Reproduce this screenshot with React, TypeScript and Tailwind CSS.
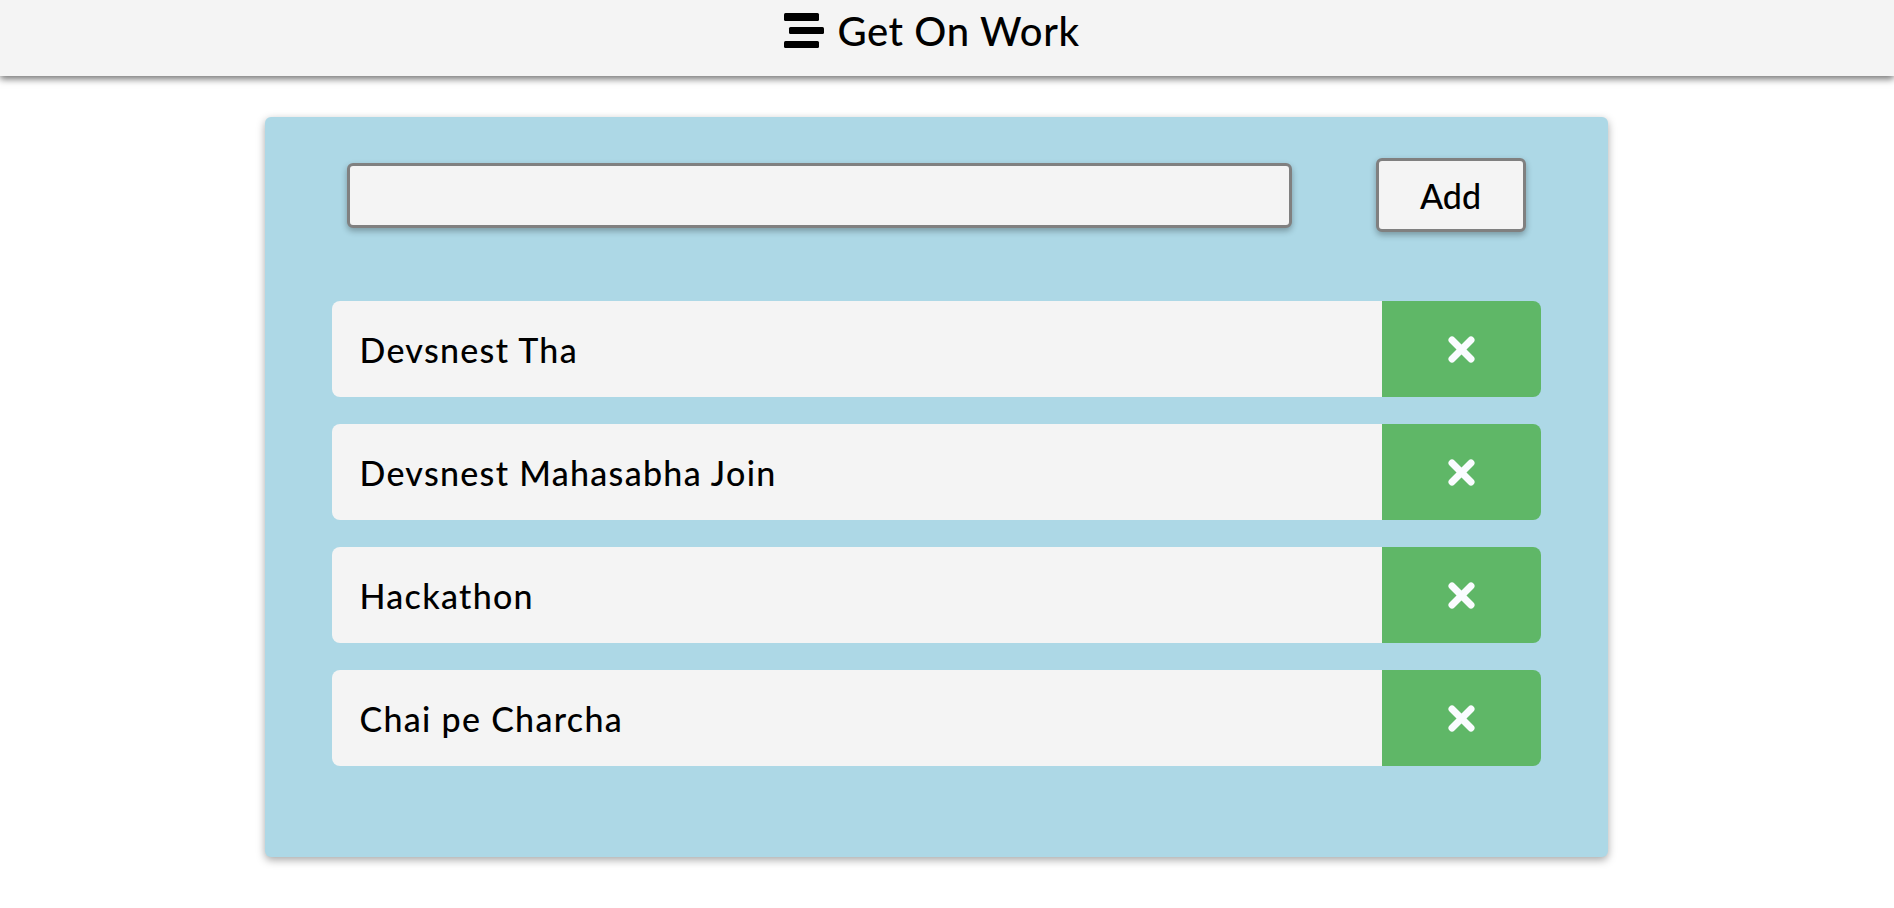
import { useState } from 'react';

const initialTodos = ['Devsnest Tha', 'Devsnest Mahasabha Join', 'Hackathon', 'Chai pe Charcha'];

function StreamIcon() {
  return (
    <svg width="40" height="36" viewBox="0 0 40 36" className="block">
      <rect x="0" y="0" width="35" height="8" rx="1.5" fill="#000" />
      <rect x="5" y="14" width="35" height="7" rx="1.5" fill="#000" />
      <rect x="0" y="28" width="35" height="7" rx="1.5" fill="#000" />
    </svg>
  );
}

function CrossIcon() {
  return (
    <svg width="29" height="29" viewBox="0 0 29 29">
      <line x1="5" y1="5" x2="24" y2="24" stroke="#fafcff" strokeWidth="7" strokeLinecap="round" />
      <line x1="24" y1="5" x2="5" y2="24" stroke="#fafcff" strokeWidth="7" strokeLinecap="round" />
    </svg>
  );
}

export default function App() {
  const [todos, setTodos] = useState(initialTodos);
  const [text, setText] = useState('');

  const addTodo = () => {
    if (!text.trim()) return;
    setTodos([...todos, text.trim()]);
    setText('');
  };

  return (
    <div className="min-h-screen bg-white text-black" style={{ fontFamily: 'Lato, "Open Sans", sans-serif' }}>
      {/* Header */}
      <header className="h-[76px] bg-[#f4f4f4] shadow-[0_3px_7px_rgba(0,0,0,0.55)] flex items-center justify-center pr-[22px] pb-[14px]">
        <div className="flex items-center gap-[13px] -ml-[8px]">
          <StreamIcon />
          <h1 className="text-[40px] font-medium leading-none tracking-[0.6px]">Get On Work</h1>
        </div>
      </header>

      {/* Card */}
      <div className="flex justify-center pr-[22px] pt-[41px] pb-10">
        <div className="w-[1343px] h-[740px] bg-[#add8e6] rounded-md shadow-[0_3px_8px_rgba(0,0,0,0.35)] px-[67px] pt-[41px]">
          <div className="flex items-center gap-[84px] px-[15px] h-[74px]">
            <input
              value={text}
              onChange={(e) => setText(e.target.value)}
              className="flex-1 h-[65px] bg-[#f4f4f4] border-[3px] border-[#808080] rounded-md shadow-[0_3px_6px_rgba(0,0,0,0.3)] outline-none px-4 text-[28px]"
            />
            <button
              onClick={addTodo}
              className="w-[150px] h-[74px] bg-[#f4f4f4] border-[3px] border-[#808080] rounded-md shadow-[0_3px_6px_rgba(0,0,0,0.3)] text-[34px] font-medium"
            >
              Add
            </button>
          </div>

          <ul className="mt-[69px] flex flex-col gap-[27px]">
            {todos.map((t, i) => (
              <li key={i} className="flex h-[96px] rounded-lg overflow-hidden">
                <div className="flex-1 bg-[#f4f4f4] flex items-center pl-[28px] text-[34px] font-medium tracking-[1.3px]">{t}</div>
                <button
                  onClick={() => setTodos(todos.filter((_, j) => j !== i))}
                  className="w-[159px] bg-[#5fb767] flex items-center justify-center"
                >
                  <CrossIcon />
                </button>
              </li>
            ))}
          </ul>
        </div>
      </div>
    </div>
  );
}
